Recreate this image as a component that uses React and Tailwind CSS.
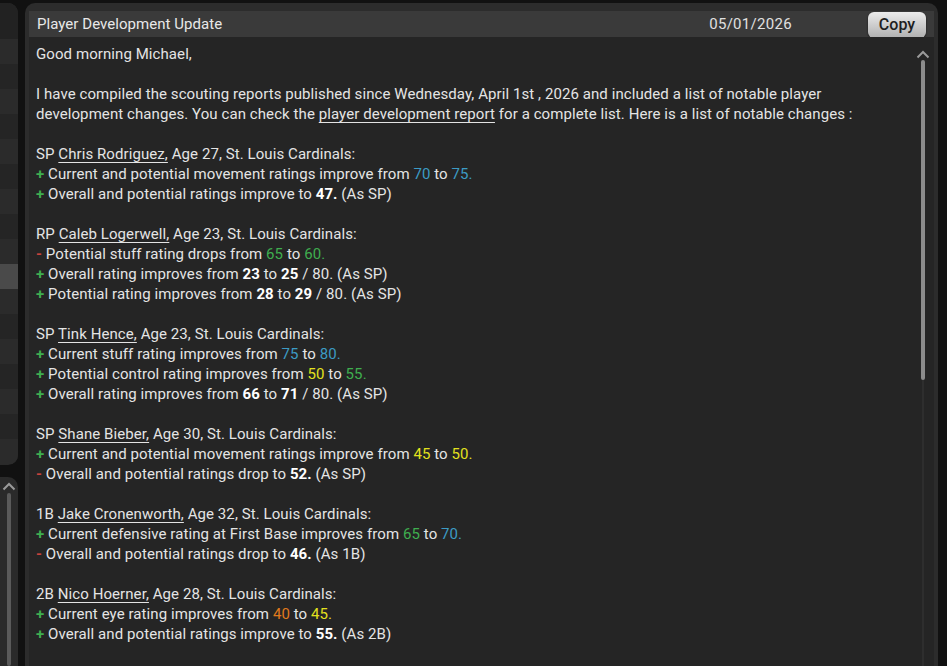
import React from 'react';

const BLUE = 'text-[#3c9bc4]';
const GREEN = 'text-[#3fae4f]';
const YELLOW = 'text-[#e3e11e]';
const ORANGE = 'text-[#e07a1c]';

function Plus() {
  return <span className="text-[#3fae4f] font-bold">+ </span>;
}
function Minus() {
  return <span className="text-[#c8423c] font-bold">- </span>;
}
function B({ children }) {
  return <span className="font-bold text-white">{children}</span>;
}
function C({ c, children }) {
  return <span className={c}>{children}</span>;
}
function Name({ children }) {
  return <span className="underline underline-offset-[3px]">{children}</span>;
}

function Blank() {
  return <div className="h-5" />;
}

function Report() {
  return (
    <div className="text-[15px] leading-5 tracking-[0.08px] text-[#e4e4e4]">
      <div>Good morning Michael,</div>
      <Blank />
      <div>
        I have compiled the scouting reports published since Wednesday, April 1st , 2026 and included a list of notable player
      </div>
      <div>
        development changes. You can check the <Name>player development report</Name> for a complete list. Here is a list of notable changes :
      </div>
      <Blank />
      <div>SP <Name>Chris Rodriguez,</Name> Age 27, St. Louis Cardinals:</div>
      <div><Plus />Current and potential movement ratings improve from <C c={BLUE}>70</C> to <C c={BLUE}>75.</C></div>
      <div><Plus />Overall and potential ratings improve to <B>47.</B> (As SP)</div>
      <Blank />
      <div>RP <Name>Caleb Logerwell,</Name> Age 23, St. Louis Cardinals:</div>
      <div><Minus />Potential stuff rating drops from <C c={GREEN}>65</C> to <C c={GREEN}>60.</C></div>
      <div><Plus />Overall rating improves from <B>23</B> to <B>25</B> / 80. (As SP)</div>
      <div><Plus />Potential rating improves from <B>28</B> to <B>29</B> / 80. (As SP)</div>
      <Blank />
      <div>SP <Name>Tink Hence,</Name> Age 23, St. Louis Cardinals:</div>
      <div><Plus />Current stuff rating improves from <C c={BLUE}>75</C> to <C c={BLUE}>80.</C></div>
      <div><Plus />Potential control rating improves from <C c={YELLOW}>50</C> to <C c={GREEN}>55.</C></div>
      <div><Plus />Overall rating improves from <B>66</B> to <B>71</B> / 80. (As SP)</div>
      <Blank />
      <div>SP <Name>Shane Bieber,</Name> Age 30, St. Louis Cardinals:</div>
      <div><Plus />Current and potential movement ratings improve from <C c={YELLOW}>45</C> to <C c={YELLOW}>50.</C></div>
      <div><Minus />Overall and potential ratings drop to <B>52.</B> (As SP)</div>
      <Blank />
      <div>1B <Name>Jake Cronenworth,</Name> Age 32, St. Louis Cardinals:</div>
      <div><Plus />Current defensive rating at First Base improves from <C c={GREEN}>65</C> to <C c={BLUE}>70.</C></div>
      <div><Minus />Overall and potential ratings drop to <B>46.</B> (As 1B)</div>
      <Blank />
      <div>2B <Name>Nico Hoerner,</Name> Age 28, St. Louis Cardinals:</div>
      <div><Plus />Current eye rating improves from <C c={ORANGE}>40</C> to <C c={YELLOW}>45.</C></div>
      <div><Plus />Overall and potential ratings improve to <B>55.</B> (As 2B)</div>
    </div>
  );
}

function Chevron({ className }) {
  return (
    <svg className={className} width="14" height="9" viewBox="0 0 14 9" fill="none">
      <path d="M1.5 7.5 L7 2 L12.5 7.5" stroke="#9a9a9a" strokeWidth="2" />
    </svg>
  );
}

function SidePanel() {
  const rows = Array.from({ length: 17 });
  return (
    <div className="flex w-[18px] shrink-0 flex-col gap-[12px] pt-[3px]">
      <div className="flex h-[462px] flex-col overflow-hidden rounded-r-[10px] bg-[#2a2a2a]">
        <div className="h-[36px] bg-[#222]" />
        {rows.map((_, i) => (
          <div
            key={i}
            className={
              i === 9
                ? 'h-[25px] bg-[#4a4a4a]'
                : i % 2 === 0
                ? 'h-[25px] bg-[#2b2b2b]'
                : 'h-[25px] bg-[#252525]'
            }
          />
        ))}
      </div>
      <div className="flex flex-1 flex-col items-center rounded-tr-[10px] bg-[#2a2a2a] pt-[5px]">
        <Chevron />
        <div className="mt-[2px] w-[4px] flex-1 rounded-full bg-[#5a5a5a]" />
      </div>
    </div>
  );
}

export default function App() {
  return (
    <div
      className="flex h-[666px] w-[947px] gap-[7px] overflow-hidden bg-[#111111]"
      style={{ fontFamily: 'Roboto, "Liberation Sans", sans-serif' }}
    >
      <SidePanel />
      <div className="mt-[3px] flex w-[913px] flex-col rounded-t-[10px] bg-[#2c2c2c] px-[4px] pt-[8px]">
        <div className="flex h-[26px] items-center bg-[#3a3a3a] pl-[8px] pr-[8px]">
          <span className="text-[15px] tracking-[0.05px] text-[#e8e8e8]">Player Development Update</span>
          <span className="ml-auto mr-[76px] text-[15px] tracking-[0.3px] text-[#e0e0e0]">05/01/2026</span>
          <button className="mt-[2px] h-[26px] w-[58px] rounded-[6px] bg-gradient-to-b from-[#ececec] to-[#b0b0b0] text-[16px] font-medium text-[#1e1e1e] shadow-[0_1px_2px_rgba(0,0,0,0.6)]">
            Copy
          </button>
        </div>
        <div className="flex flex-1 bg-[#252525] pl-[7px] pt-[7px]">
          <div className="flex-1">
            <Report />
          </div>
          <div className="flex w-[18px] flex-col items-center pt-[6px] mr-[2px]">
            <Chevron />
            <div className="mt-[1px] h-[320px] w-[4px] rounded-full bg-[#8c8c8c]" />
            <div className="w-[2px] flex-1 bg-[#2e2e2e]" />
          </div>
        </div>
      </div>
    </div>
  );
}
